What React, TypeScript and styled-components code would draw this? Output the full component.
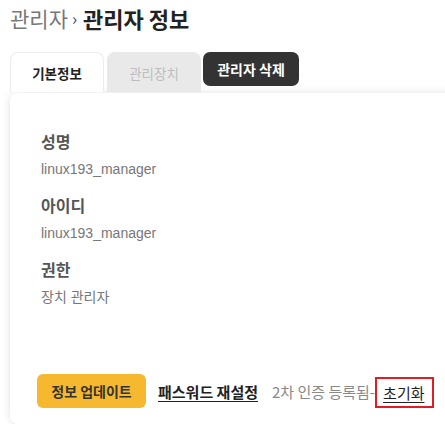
import styled, { createGlobalStyle } from 'styled-components';

const GlobalStyle = createGlobalStyle`
    html, body {
        margin: 0;
        padding: 0;
        background: #fff;
        overflow: hidden;
    }

    body {
        font-family: 'Noto Sans CJK KR', 'Noto Sans', sans-serif;
        color: #333;
    }
`;

const Page = styled.div`
    width: 470px;
    padding: 1px 0 0 10px;
`;

const Title = styled.h1`
    display: flex;
    align-items: center;
    margin: 0;
    height: 33px;
    font-size: 22px;
    font-weight: 700;
    color: #222;
`;

const Crumb = styled.span`
    font-size: 21px;
    font-weight: 400;
    color: #777;
`;

const Arrow = styled.span`
    margin: 0 6px 0 4px;
    font-size: 17px;
    font-weight: 400;
    color: #444;
`;

const TabBar = styled.div`
    display: flex;
    align-items: flex-start;
    gap: 3px;
    margin-top: 18px;
`;

const Tab = styled.div<{ active?: boolean }>`
    display: flex;
    justify-content: center;
    align-items: center;
    width: 94px;
    height: 40px;
    box-sizing: border-box;
    font-size: 13.5px;
    font-weight: ${(props) => (props.active ? 700 : 400)};
    color: ${(props) => (props.active ? '#222' : '#bdbdbd')};
    background: ${(props) => (props.active ? '#fff' : '#e9e9e9')};
    border: 1px solid ${(props) => (props.active ? '#ececec' : '#e9e9e9')};
    border-bottom: none;
    border-radius: 8px 8px 0 0;
`;

const DeleteButton = styled.button`
    width: 96px;
    height: 34px;
    margin-left: -1px;
    border: none;
    border-radius: 7px;
    background: #333;
    color: #fff;
    font-family: inherit;
    font-size: 14px;
    font-weight: 700;
    cursor: pointer;
`;

const Card = styled.div`
    margin-top: 1px;
    padding: 36px 27px 16px 27px;
    background: #fff;
    border-radius: 8px;
    box-shadow: 0 0 8px rgba(0, 0, 0, 0.12);
`;

const Field = styled.div`
    display: flex;
    flex-direction: column;
    padding-left: 4px;
    margin-bottom: 13px;
`;

const Label = styled.div`
    font-size: 16px;
    font-weight: 700;
    color: #555;
    line-height: 24px;
`;

const Value = styled.div`
    margin-top: 5px;
    font-family: 'Liberation Sans', 'Noto Sans CJK KR', sans-serif;
    font-size: 14px;
    color: #777;
    line-height: 22px;
`;

const Actions = styled.div`
    display: flex;
    align-items: center;
    margin-top: 66px;
`;

const UpdateButton = styled.button`
    width: 109px;
    height: 34px;
    border: none;
    border-radius: 6px;
    background: #f5b82e;
    color: #333;
    font-family: inherit;
    font-size: 14px;
    font-weight: 700;
    cursor: pointer;
`;

const LinkText = styled.span`
    margin-left: 12px;
    font-size: 15px;
    font-weight: 700;
    color: #222;
    text-decoration: underline;
    text-underline-offset: 3px;
`;

const Status = styled.span`
    margin-left: 14px;
    font-size: 15px;
    color: #888;
`;

const ResetBox = styled.span`
    display: inline-flex;
    align-items: center;
    height: 31px;
    margin-top: 2px;
    padding: 0 8px 0 6px;
    box-sizing: border-box;
    border: 2px solid #e21c25;
    font-size: 15px;
    color: #222;
    text-decoration: underline;
    text-underline-offset: 3px;
`;

const fields = [
    { label: '성명', value: 'linux193_manager' },
    { label: '아이디', value: 'linux193_manager' },
    { label: '권한', value: '장치 관리자' },
];

const App = () => {
    return (
        <>
            <GlobalStyle />
            <Page>
                <Title>
                    <Crumb>관리자</Crumb>
                    <Arrow>›</Arrow>
                    관리자 정보
                </Title>
                <TabBar>
                    <Tab active>기본정보</Tab>
                    <Tab>관리장치</Tab>
                    <DeleteButton>관리자 삭제</DeleteButton>
                </TabBar>
                <Card>
                    {fields.map((f, i) => (
                        <Field key={i}>
                            <Label>{f.label}</Label>
                            <Value>{f.value}</Value>
                        </Field>
                    ))}
                    <Actions>
                        <UpdateButton>정보 업데이트</UpdateButton>
                        <LinkText>패스워드 재설정</LinkText>
                        <Status>2차 인증 등록됨-</Status>
                        <ResetBox>초기화</ResetBox>
                    </Actions>
                </Card>
            </Page>
        </>
    );
};

export default App;
